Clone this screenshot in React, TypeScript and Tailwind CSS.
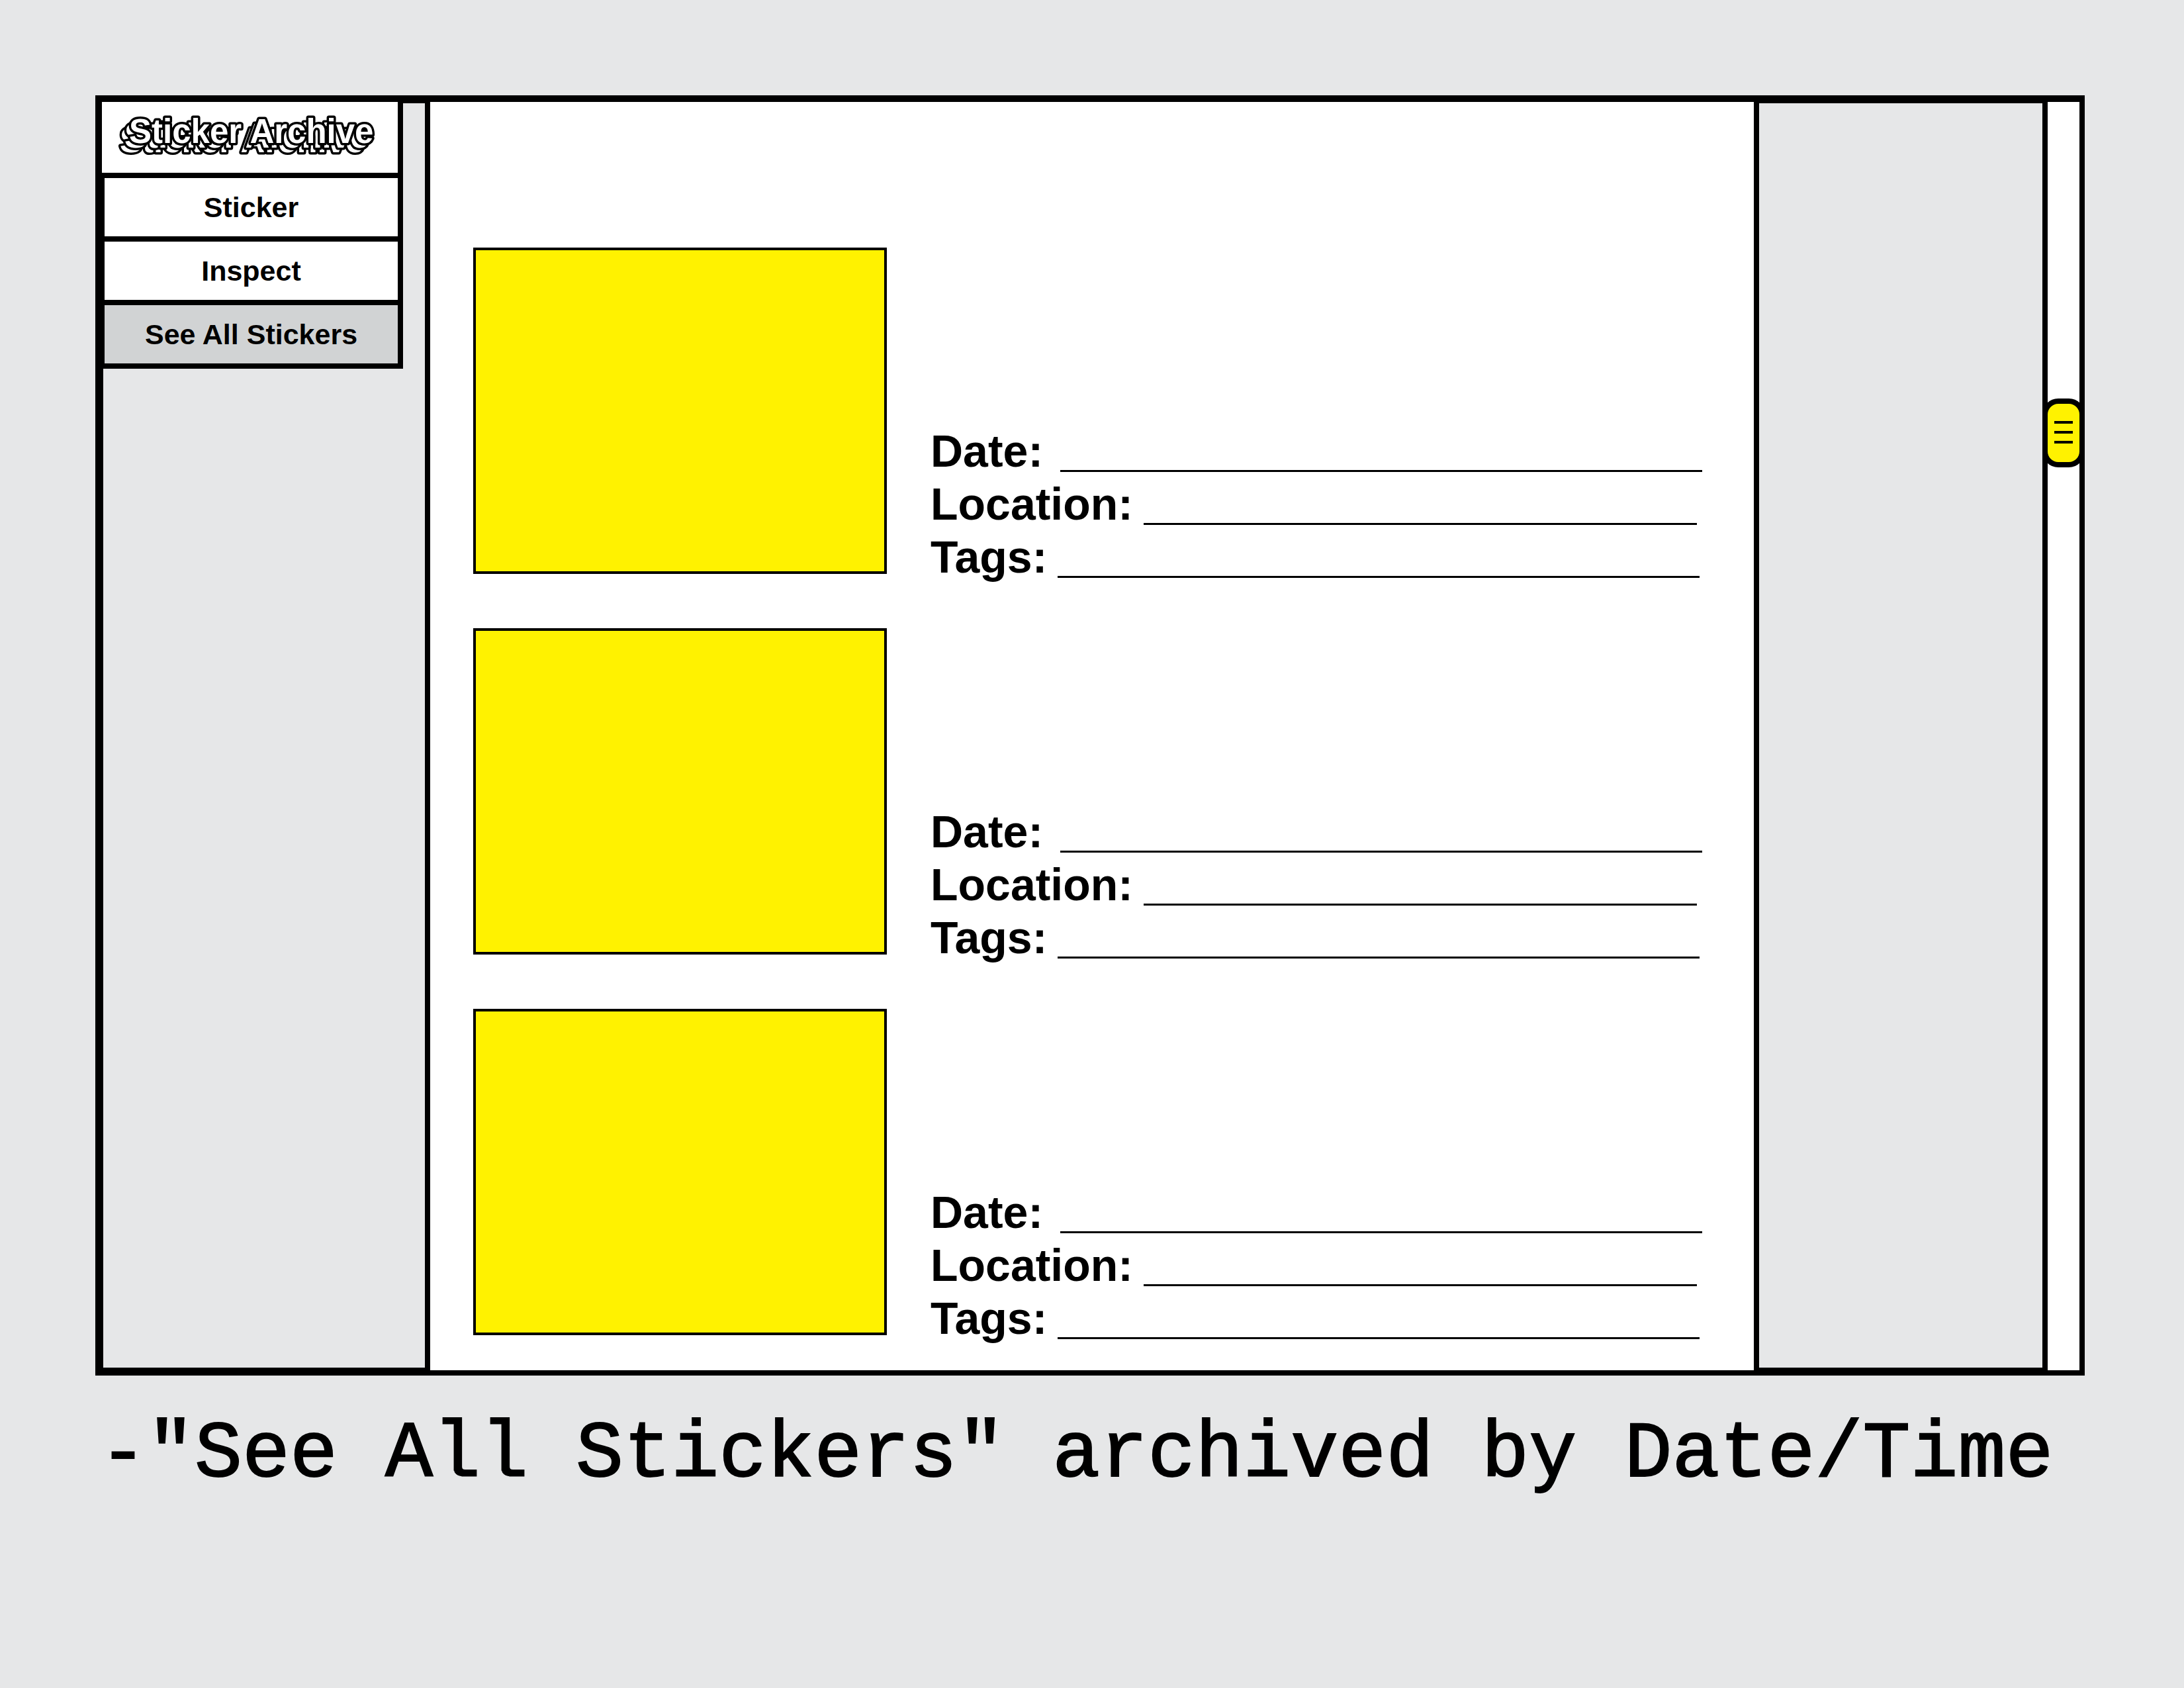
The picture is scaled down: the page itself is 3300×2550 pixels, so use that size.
const navItems = [
  { label: 'Sticker', active: false },
  { label: 'Inspect', active: false },
  { label: 'See All Stickers', active: true },
];

const fields = [
  { label: 'Date:', name: 'date', line: 'ml-[26px]' },
  { label: 'Location:', name: 'location', line: 'ml-4 mr-2' },
  { label: 'Tags:', name: 'tags', line: 'ml-4 mr-1' },
];

const stickers = [1, 2, 3];

function Logo() {
  return (
    <a href="#" aria-label="Sticker Archive" className="block h-[107px] w-[447px] bg-white">
      <svg viewBox="0 0 447 107" className="block h-full w-full">
        <use href="#wordmark" x="-14" y="14" />
        <use href="#wordmark" x="-7" y="7" />
        <text
          id="wordmark"
          x="41"
          y="62"
          fontSize="51"
          fill="#ffffff"
          stroke="#000000"
          strokeWidth="7"
          strokeLinejoin="round"
          paintOrder="stroke"
          className="font-['Liberation_Sans',sans-serif] font-bold"
        >
          Sticker Archive
        </text>
      </svg>
    </a>
  );
}

function Sidebar() {
  return (
    <aside className="w-[488px] shrink-0 border-t-2 border-b-4 border-l-2 border-black">
      <nav className="-mt-0.5 -ml-0.5 flex w-[455px] flex-col gap-2 border-r-8 border-b-8 border-black bg-black">
        <Logo />
        {navItems.map((item) => (
          <button
            key={item.label}
            type="button"
            aria-current={item.active ? 'page' : undefined}
            className={
              item.active
                ? 'ml-1 h-22 bg-[#d1d3d4] text-center text-[43px] leading-none font-bold'
                : 'ml-1 h-22 bg-white text-center text-[43px] leading-none font-bold'
            }
          >
            {item.label}
          </button>
        ))}
      </nav>
    </aside>
  );
}

function StickerEntry({ id }: { id: number }) {
  return (
    <li className="flex items-end gap-[66px]">
      <div className="h-[493px] w-[625px] shrink-0 border-4 border-black bg-[#fff200]" />
      <div className="-mb-1.5 flex-1">
        {fields.map((field) => (
          <div key={field.name} className="flex h-20 items-end">
            <label htmlFor={`${field.name}-${id}`} className="text-[68px] leading-16 font-bold">
              {field.label}
            </label>
            <input
              id={`${field.name}-${id}`}
              type="text"
              className={`h-full min-w-0 flex-1 border-b-3 border-black bg-transparent text-5xl outline-none ${field.line}`}
            />
          </div>
        ))}
      </div>
    </li>
  );
}

function ScrollBar() {
  return (
    <div className="w-14 shrink-0 border-l-8 border-black bg-white">
      <button
        type="button"
        aria-label="Scroll"
        className="relative mt-[448px] -ml-2 flex h-[104px] w-16 flex-col items-center gap-[11px] rounded-3xl border-8 border-black bg-[#fff200] pt-[26px]"
      >
        <span className="h-1 w-7 bg-black" />
        <span className="h-1 w-7 bg-black" />
        <span className="h-1 w-7 bg-black" />
      </button>
    </div>
  );
}

export default function App() {
  return (
    <div className="min-h-screen bg-[#e6e7e8] pt-36 pr-[150px] pb-36 pl-36 font-['Liberation_Sans',Arial,sans-serif] text-black">
      <div className="flex border-t-10 border-r-8 border-b-8 border-l-10 border-black">
        <Sidebar />
        <main className="min-w-0 flex-1 border-x-8 border-black bg-white pt-[220px] pr-[78px] pb-[53px] pl-[65px]">
          <ul className="flex flex-col gap-[82px]">
            {stickers.map((id) => (
              <StickerEntry key={id} id={id} />
            ))}
          </ul>
        </main>
        <aside className="w-[428px] shrink-0 border-t-2 border-b-4 border-black" />
        <ScrollBar />
      </div>
      <p className="mt-[52px] ml-1.5 font-['Liberation_Mono',monospace] text-[120px] leading-[136px] whitespace-nowrap [-webkit-text-stroke:2px_black]">
        -"See All Stickers" archived by Date/Time
      </p>
    </div>
  );
}
